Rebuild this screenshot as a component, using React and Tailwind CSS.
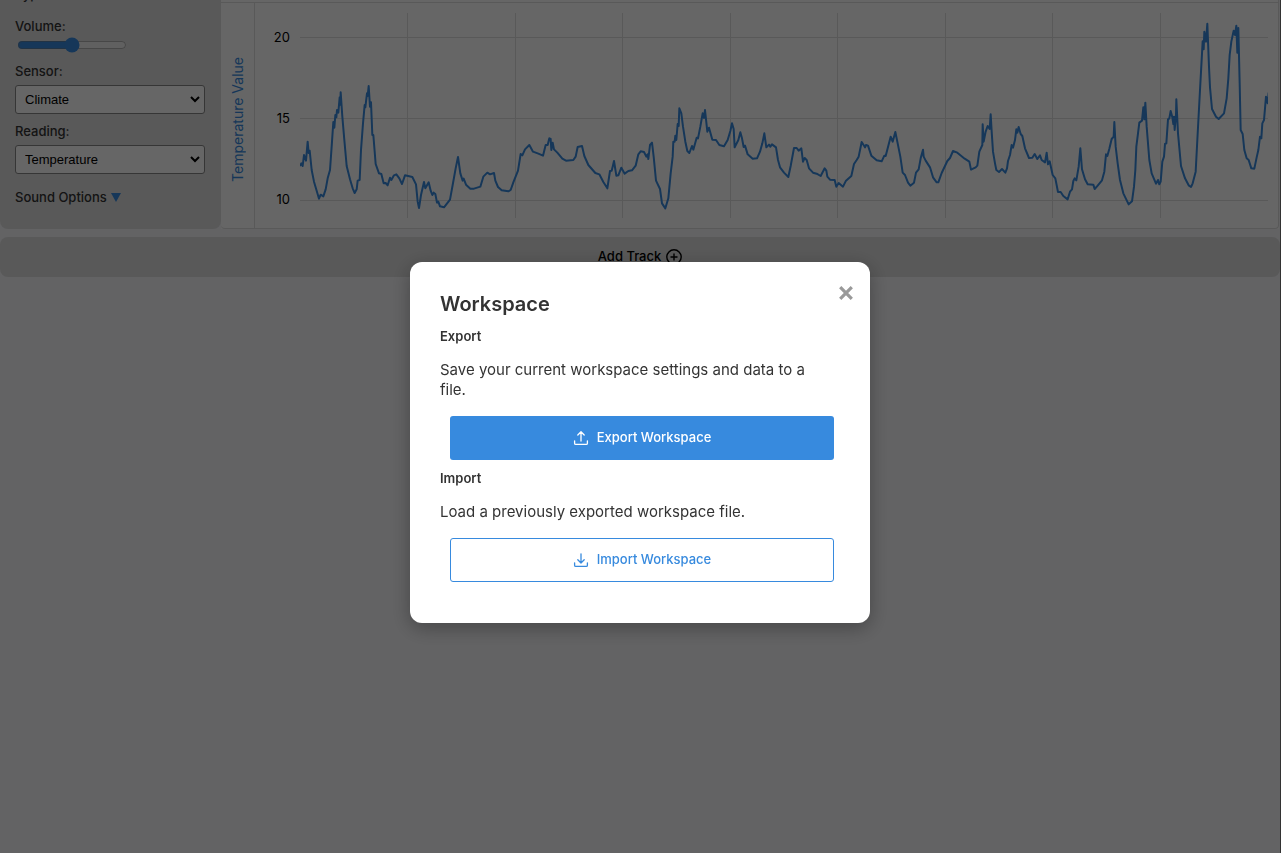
import { useState } from "react";

const readings =
    "0,459 4,451 8,459 12,426 18,443 23,386 26,420 29,413 35,471 42,506 50,533 57,557 62,545 70,550 77,529 83,496 90,471 96,386 100,327 103,344 106,306 109,313 111,291 115,299 119,253 121,275 122,238 127,311 133,381 140,459 150,499 158,526 164,540 170,529 173,503 179,501 183,411 189,331 194,276 196,283 201,241 203,249 206,219 210,281 213,268 217,366 220,366 227,453 237,481 244,483 251,511 257,510 263,517 270,494 274,501 282,487 289,484 298,496 306,513 315,487 337,492 348,514 353,566 357,585 363,546 372,507 376,526 386,508 392,533 397,546 401,539 406,543 411,569 415,566 420,580 432,583 450,560 458,516 467,466 474,432 481,481 488,503 491,497 498,515 511,527 522,527 541,521 550,491 562,479 570,484 582,480 586,503 594,522 605,532 625,535 632,531 640,508 654,473 662,423 667,427 675,409 688,396 " +
    "699,416 715,422 729,428 737,396 743,396 748,376 752,378 754,411 758,389 762,409 772,419 787,437 798,443 820,441 827,431 833,402 846,399 853,429 865,456 886,480 898,484 910,507 922,526 930,474 935,473 938,461 942,444 949,488 955,487 964,464 974,482 985,474 996,472 1007,458 1015,424 1022,415 1032,417 1039,431 1043,424 1045,438 1050,396 1056,389 1061,431 1068,503 1080,528 1086,571 1096,586 1105,556 1112,481 1118,431 1120,386 1124,386 1126,368 1129,381 1133,333 1136,339 1138,286 1144,301 1149,341 1156,386 1162,414 1168,420 1176,399 1180,410 1190,374 1194,376 1201,341 1208,301 1212,315 1215,291 1222,356 1227,344 1237,380 1248,381 1258,396 1272,400 1283,381 1291,354 1296,331 1301,348 1304,403 1315,381 1321,358 1326,376 1331,402 1335,398 1343,424 1358,437 1371,436 1380,416 1387,391 1393,361 1399,403 1407,395 " +
    "1411,401 1416,394 1428,403 1434,441 1440,463 1452,479 1465,492 1472,459 1482,405 1490,405 1496,413 1504,406 1509,446 1514,435 1520,441 1527,466 1539,479 1550,482 1562,489 1574,466 1579,473 1582,491 1590,500 1604,501 1609,521 1616,510 1629,521 1638,503 1654,489 1662,453 1670,441 1676,431 1685,387 1695,403 1698,396 1704,398 1714,428 1730,442 1745,445 1753,428 1757,429 1765,398 1772,371 1778,386 1786,357 1793,391 1801,431 1808,479 1815,486 1824,509 1831,518 1842,509 1848,479 1856,469 1862,436 1869,410 1871,431 1877,443 1890,463 1899,493 1910,508 1915,508 1925,480 1942,444 1950,435 1959,414 1972,419 1994,437 2008,446 2013,470 2027,463 2032,458 2038,416 2047,396 2048,334 2051,386 2057,356 2063,339 2069,348 2072,304 2075,356 2079,416 2085,451 2089,471 2097,477 2106,468 2116,479 2121,466 2124,444 " +
    "2130,426 2135,396 2139,404 2145,381 2149,349 2152,359 2156,342 2162,363 2167,369 2175,406 2187,435 2197,434 2204,423 2212,438 2220,427 2225,441 2235,448 2240,419 2244,454 2249,445 2258,486 2266,496 2274,537 2282,537 2290,549 2303,559 2310,536 2316,529 2320,504 2324,496 2329,502 2336,461 2341,406 2346,469 2355,499 2363,514 2380,515 2384,528 2393,518 2406,502 2413,476 2418,424 2422,429 2428,407 2435,378 2441,371 2443,327 2447,401 2453,451 2460,501 2470,541 2486,574 2496,565 2502,521 2506,471 2509,401 2514,361 2518,329 2526,323 2530,283 2533,319 2536,269 2540,341 2548,441 2555,481 2568,512 2574,501 2578,514 2582,506 2587,446 2592,431 2595,393 2599,391 2604,319 2608,316 2612,294 2617,313 2620,333 2622,311 2624,351 2628,306 2629,259 2634,361 2643,459 2655,496 2666,517 2673,522 2678,511 2687,476 2692,381 2700,231 2708,85 2711,109 2713,56 2718,86 2722,32 2727,161 2730,223 2736,288 2748,311 2756,318 2772,301 2780,256 2785,196 2789,126 2794,86 2801,53 2805,66 2809,38 2812,119 2815,45 2819,211 2822,351 2828,363 2833,411 2840,436 2846,441 2854,466 2863,467 2870,433 2875,411 2880,371 2884,376 2887,331 2892,321 2898,251 2903,271 2906,239";

const rows = [73, 316, 562];
const columns = [322, 646, 967, 1291, 1612, 1936, 2257, 2581];

const Chart = () => (
    <svg className="block h-[205px] min-w-0 flex-1" viewBox="0 0 2904 615" preserveAspectRatio="none" role="img" aria-label="Temperature">
        <g stroke="#dedede" strokeWidth="1" shapeRendering="crispEdges">
            {rows.map((y) => (
                <line key={y} x1="0" x2="2904" y1={y} y2={y} vectorEffect="non-scaling-stroke" />
            ))}
            {columns.map((x) => (
                <line key={x} x1={x} x2={x} y1="0" y2="615" vectorEffect="non-scaling-stroke" />
            ))}
        </g>
        <polyline points={readings} fill="none" stroke="#378ade" strokeWidth="2" strokeLinejoin="round" vectorEffect="non-scaling-stroke" />
    </svg>
);

const TrayIcon = ({ arrow }) => (
    <svg className="h-4 w-4" viewBox="0 0 16 16" fill="none" stroke="currentColor" strokeWidth="1.3" strokeLinecap="round" strokeLinejoin="round" aria-hidden="true">
        <path d="M1.6 10.8v2.4c0 .7.5 1.2 1.2 1.2h10.4c.7 0 1.2-.5 1.2-1.2v-2.4" />
        <path d={arrow} />
    </svg>
);

const Select = ({ id, label, value, options }) => {
    const [selected, setSelected] = useState(value);

    return (
        <>
            <label htmlFor={id} className="leading-5">{label}</label>
            <div className="relative mt-1 mb-[7px] flex">
                <select
                    id={id}
                    value={selected}
                    onChange={(e) => setSelected(e.target.value)}
                    className="h-[29px] w-full appearance-none rounded-[3px] border border-[#888] bg-white pl-[9px] font-['Liberation_Sans',sans-serif] text-[13px] font-normal text-black"
                >
                    {options.map((option) => (
                        <option key={option}>{option}</option>
                    ))}
                </select>
                <svg className="pointer-events-none absolute top-2 right-1 h-3 w-3" viewBox="0 0 12 12" fill="none" stroke="#000" strokeWidth="2" aria-hidden="true">
                    <path d="M2 4l4 4 4-4" />
                </svg>
            </div>
        </>
    );
};

const Track = () => {
    const [volume, setVolume] = useState(50);

    return (
        <section className="flex">
            <div className="-mt-4 flex w-[221px] shrink-0 flex-col rounded-lg bg-[#dedede] pr-4 pb-[22px] pl-[15px] text-[13px] font-medium text-[#333]">
                <span className="mb-3 leading-5">Type:</span>
                <label htmlFor="volume" className="leading-5">Volume:</label>
                <input
                    id="volume"
                    type="range"
                    value={volume}
                    onChange={(e) => setVolume(e.target.value)}
                    className="mt-px mb-2 ml-[2px] h-4 w-[110px] accent-[#378ade]"
                />
                <Select id="sensor" label="Sensor:" value="Climate" options={["Climate"]} />
                <Select id="reading" label="Reading:" value="Temperature" options={["Temperature"]} />
                <button type="button" className="mt-[6px] flex items-center gap-1 leading-5">
                    Sound Options
                    <svg className="h-[9px] w-[10px]" viewBox="0 0 10 9" fill="#378ade" aria-hidden="true">
                        <path d="M0 0h10L5 9z" />
                    </svg>
                </button>
            </div>
            <div className="mr-px flex min-w-0 flex-1 flex-col bg-white">
                <div className="flex flex-1 rounded-b border-r border-b border-[#dedede]">
                    <div className="mt-[2px] flex w-[34px] shrink-0 items-center justify-center border-t border-r border-[#dedede] pt-2">
                        <span className="rotate-180 text-sm text-[#378ade] [writing-mode:vertical-rl]">Temperature Value</span>
                    </div>
                    <div className="mt-[2px] flex min-w-0 flex-1 items-start border-t border-[#dedede] pt-[10px] pr-[10px]">
                        <div className="flex w-[45px] shrink-0 flex-col gap-[61px] pt-[14px] pr-[10px] text-right text-[13px] leading-5">
                            <span>20</span>
                            <span>15</span>
                            <span>10</span>
                        </div>
                        <Chart />
                    </div>
                </div>
            </div>
        </section>
    );
};

const WorkspaceModal = () => (
    <div className="fixed inset-0 flex items-center justify-center border-r border-[#333] bg-black/60 pt-8">
        <div role="dialog" aria-labelledby="workspace-title" className="relative w-[460px] rounded-xl bg-white px-[30px] pt-7 pb-[41px] text-[#333] shadow-[0_5px_20px_rgba(0,0,0,0.3)]">
            <button type="button" aria-label="Close" className="absolute top-6 right-[17px] text-[#999]">
                <svg className="h-[14px] w-[14px]" viewBox="0 0 14 14" fill="none" stroke="currentColor" strokeWidth="3.2" aria-hidden="true">
                    <path d="M1.2 1.2l11.6 11.6M12.8 1.2L1.2 12.8" />
                </svg>
            </button>
            <h2 id="workspace-title" className="text-xl leading-7 font-semibold">Workspace</h2>
            <h3 className="mt-2 text-[13px] leading-5 font-semibold">Export</h3>
            <p className="mt-[14px] pr-4 text-[15px] leading-5">Save your current workspace settings and data to a file.</p>
            <button type="button" className="mx-[10px] mt-4 flex h-11 w-96 items-center justify-center gap-2 rounded-[3px] bg-[#378ade] text-[13px] font-medium text-white">
                <TrayIcon arrow="M8 11V1.8M4.8 5L8 1.8 11.2 5" />
                Export Workspace
            </button>
            <h3 className="mt-2 text-[13px] leading-5 font-semibold">Import</h3>
            <p className="mt-[14px] pr-4 text-[15px] leading-5">Load a previously exported workspace file.</p>
            <button type="button" className="mx-[10px] mt-4 flex h-11 w-96 items-center justify-center gap-2 rounded-[3px] border border-[#378ade] bg-white text-[13px] font-medium text-[#378ade]">
                <TrayIcon arrow="M8 1.8V11M4.8 7.8L8 11l3.2-3.2" />
                Import Workspace
            </button>
        </div>
    </div>
);

export default function App() {
    return (
        <div className="min-h-screen overflow-hidden bg-[#f7f7fa] pr-px font-['Inter',sans-serif]">
            <Track />
            <button type="button" className="mt-2 flex h-10 w-full items-center justify-center gap-[5px] rounded-lg bg-[#dedede] text-[13px] font-medium text-black">
                Add Track
                <svg className="h-4 w-4" viewBox="0 0 16 16" fill="none" stroke="currentColor" strokeWidth="1.4" aria-hidden="true">
                    <circle cx="8" cy="8" r="7.2" />
                    <path d="M8 4.5v7M4.5 8h7" />
                </svg>
            </button>
            <WorkspaceModal />
        </div>
    );
}
